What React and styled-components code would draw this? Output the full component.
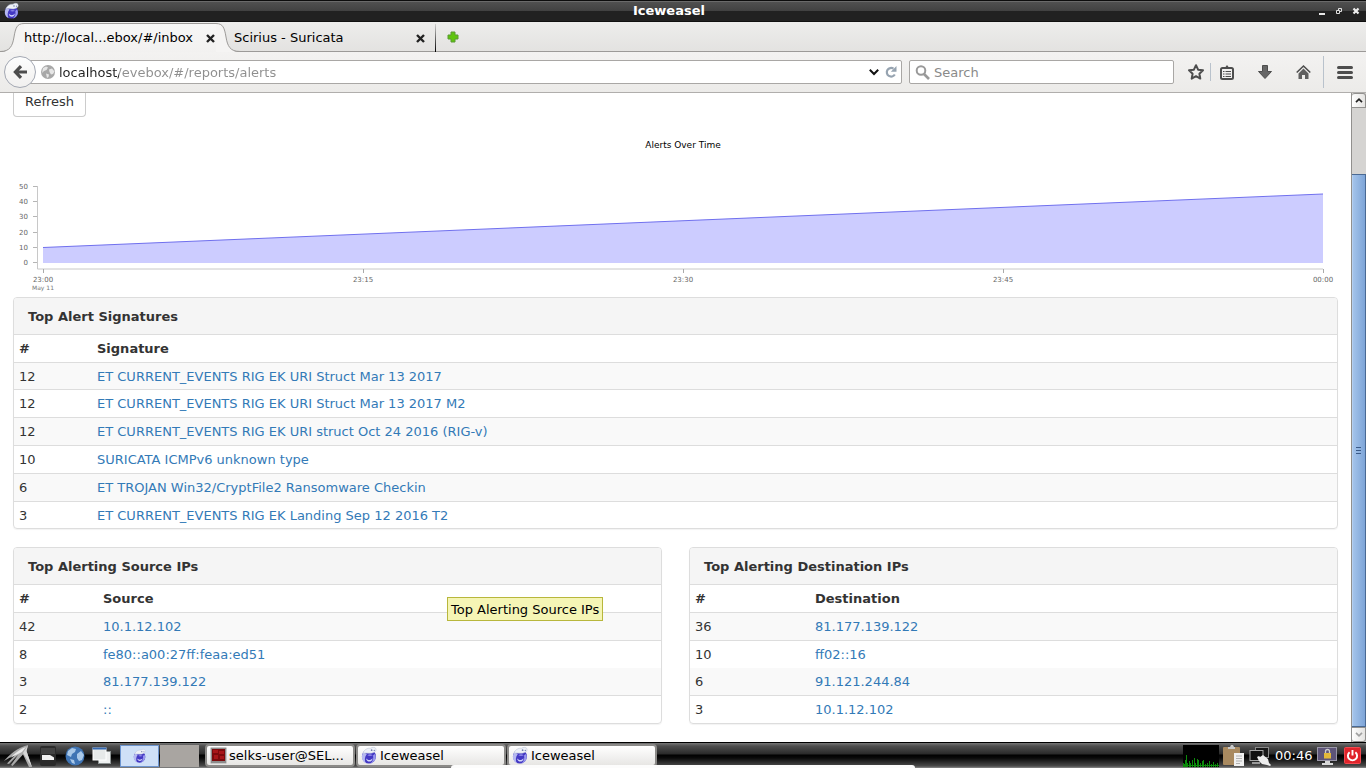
import React from "react";
import styled, { createGlobalStyle, css } from "styled-components";

const GlobalStyle = createGlobalStyle`
  *, *::before, *::after { box-sizing: border-box; }
  body { margin: 0; background: #fff; font-family: "DejaVu Sans", sans-serif; font-size: 13px; color: #333; }
  button, input { font: inherit; }
`;

const Desktop = styled.div`
  display: flex;
  flex-direction: column;
  min-height: 100vh;
`;

/* ---------- window title ---------- */
const TitleBar = styled.header`
  display: flex;
  align-items: center;
  height: 22px;
  padding: 0 6px 0 4px;
  color: #fff;
  border-top: 1px solid #0c0c0c;
  border-bottom: 1px solid #101010;
  background: linear-gradient(#6a6a6a 0 1px, #505050 1px, #414141 10px, #212121 10px, #212121 100%);
`;
const WindowTitle = styled.h1`
  flex: 1;
  margin: 0;
  font-size: 13px;
  line-height: 18px;
  font-weight: bold;
  text-align: center;
`;
const WindowControls = styled.div`
  display: flex;
  gap: 9px;
`;
const IconButton = styled.button`
  display: flex;
  align-items: center;
  justify-content: center;
  flex: none;
  width: ${(p) => p.$w || 24}px;
  height: ${(p) => p.$h || 24}px;
  padding: 0;
  border: 0;
  background: none;
  color: inherit;
`;
const Svg = styled.svg`
  display: block;
  flex: none;
  overflow: visible;
`;

/* ---------- tabs ---------- */
const TabStrip = styled.div`
  display: flex;
  height: 30px;
  background: linear-gradient(#ededec, #e3e2e0);
  box-shadow: inset 0 -1px #9c9a98;
`;
const ActiveTab = styled.div`
  display: flex;
  width: 240px;
`;
const TabBody = styled.div`
  display: flex;
  flex: 1;
  align-items: center;
  justify-content: space-between;
  height: 29px;
  margin-top: 1px;
  border-top: 1px solid #9c9a98;
  background: linear-gradient(#f7f7f6, #f2f1f0);
`;
const Tab = styled.div`
  display: flex;
  align-items: center;
  justify-content: space-between;
  width: 202px;
  padding: 2px 8px 0 0;
  margin-left: -6px;
  position: relative;
`;
const TabLabel = styled.span`
  color: #000;
  line-height: 18px;
  white-space: nowrap;
`;
const TabDivider = styled.span`
  width: 1px;
  margin: 2px 0 0 -1px;
  background: linear-gradient(#cfcfce, #000);
`;

/* ---------- toolbar ---------- */
const Toolbar = styled.div`
  display: flex;
  align-items: center;
  height: 41px;
  padding: 0 11px 0 4px;
  border-bottom: 1px solid #b0aeac;
  background: linear-gradient(#f3f2f1, #ecebe9);
`;
const BackButton = styled.button`
  display: flex;
  align-items: center;
  justify-content: center;
  flex: none;
  width: 32px;
  height: 32px;
  padding: 0;
  border: 1px solid #a3a8b3;
  border-radius: 50%;
  background: linear-gradient(#fdfdfd, #f1f0ef);
  position: relative;
`;
const Field = styled.label`
  display: flex;
  align-items: center;
  gap: 4px;
  height: 24px;
  border: 1px solid #a9a7a5;
  background: #fff;
  border-radius: ${(p) => (p.$joined ? "0 2px 2px 0" : "2px")};
  ${(p) =>
    p.$joined
      ? css`flex: 1; padding: 0 4px 0 12px; margin-left: -8px;`
      : css`flex: none; width: 265px; padding: 0 5px; margin-left: 7px;`}
`;
const TextInput = styled.input`
  flex: 1;
  min-width: 0;
  height: 20px;
  padding: 0;
  border: 0;
  outline: 0;
  background: none;
  color: #222;
  &::placeholder { color: #8a8a8a; opacity: 1; }
`;
const AddressInput = styled(TextInput)`
  color: transparent;
  background: linear-gradient(90deg, #222 60px, #8e8e8e 60px);
  -webkit-background-clip: text;
  background-clip: text;
`;
const ToolGroup = styled.div`
  display: flex;
  align-items: center;
  gap: ${(p) => p.$gap}px;
  margin-left: ${(p) => p.$before || 0}px;
`;
const ToolDivider = styled.span`
  width: 1px;
  height: ${(p) => p.$h}px;
  background: #b9c2cc;
`;

/* ---------- viewport ---------- */
const Viewport = styled.div`
  display: flex;
  flex: 1;
`;
const Page = styled.main`
  flex: 1;
  min-width: 0;
  padding: 0 13px 18px;
  background: #fff;
`;
const RefreshButton = styled.button`
  display: block;
  height: 24px;
  padding: 0 11px 5px;
  line-height: 18px;
  color: #333;
  background: #fff;
  border: 1px solid #ccc;
  border-top: 0;
  border-radius: 0 0 4px 4px;
`;
const Chart = styled.svg`
  display: block;
  width: 100%;
  height: auto;
  text { font-family: "DejaVu Sans", sans-serif; }
`;
const Panels = styled.div`
  display: grid;
  grid-template-columns: 1fr 1fr;
  gap: 18px 27px;
`;
const Panel = styled.section`
  overflow: hidden;
  border: 1px solid #ddd;
  border-radius: 4px;
  box-shadow: 0 1px 1px rgba(0, 0, 0, 0.05);
  ${(p) => p.$wide && css`grid-column: 1 / -1;`}
`;
const PanelHeading = styled.h2`
  margin: 0;
  height: 37px;
  padding: 9px 14px 0;
  font-size: 13px;
  line-height: 19px;
  font-weight: bold;
  background: #f5f5f5;
  border-bottom: 1px solid #ddd;
`;
const DataTable = styled.table`
  width: 100%;
  table-layout: fixed;
  border-collapse: separate;
  border-spacing: 0;
  th, td {
    height: 27px;
    padding: 4px 5px;
    line-height: 19px;
    text-align: left;
  }
  th:first-child { width: ${(p) => p.$first}px; }
`;
const Row = styled.tr`
  &:nth-child(odd) { background: #f9f9f9; }
  td { border-top: ${(p) => (p.$joined ? 0 : 1)}px solid #ddd; }
  ${(p) => p.$tight && css`td { padding-bottom: 3px; }`}
`;
const CellLink = styled.a`
  color: #337ab7;
  text-decoration: none;
`;
const Tooltip = styled.div`
  position: absolute;
  left: 447px;
  top: 597px;
  padding: 3px 3px 1px;
  line-height: 18px;
  color: #000;
  background: #f5f5b5;
  border: 1px solid #b8b73c;
`;

/* ---------- scrollbar ---------- */
const ScrollBar = styled.div`
  display: flex;
  flex-direction: column;
  width: 15px;
  border-left: 1px solid #91908e;
  background: #d5d4d2;
`;
const ScrollStep = styled.button`
  display: flex;
  align-items: center;
  justify-content: center;
  height: 15px;
  padding: 0;
  color: ${(p) => (p.$off ? "#a0a0a0" : "#222")};
  border: 1px solid #91908e;
  border-left: 0;
  border-radius: ${(p) => (p.$off ? "0 0 3px 3px" : "3px 3px 0 0")};
  background: linear-gradient(90deg, #fff, #e4e3e1);
`;
const ScrollTrack = styled.div`
  display: flex;
  flex: 1;
  padding-top: 66px;
`;
const ScrollThumb = styled.div`
  display: flex;
  align-items: center;
  justify-content: center;
  flex: 1;
  border: 1px solid #4a6a94;
  border-left: 0;
  background: linear-gradient(90deg, #b4cff0 0 1px, #a3c3ea 1px, #7ea5d8);
`;

/* ---------- taskbar ---------- */
const TaskBar = styled.footer`
  display: flex;
  align-items: center;
  height: 26px;
  padding: 0 4px;
  position: relative;
  overflow: hidden;
  border-top: 1px solid #000;
  background: linear-gradient(#777 0, #4e4e4e 3px, #2a2a2a 11px, #000 12px, #0a0a0a 15px, #4a4a4a 23px, #8a8a8a 25px);
`;
const Launchers = styled.div`
  display: flex;
  align-items: center;
  width: 116px;
  gap: 4px;
`;
const Pager = styled.div`
  display: flex;
  gap: 1px;
`;
const PagerCell = styled.button`
  display: flex;
  align-items: center;
  justify-content: center;
  width: 39px;
  height: 22px;
  padding: 0;
  border: ${(p) => (p.$current ? "1px solid #6c94cf" : "0")};
  background: ${(p) => (p.$current ? "#cfe0f7" : "#a9a5a1")};
`;
const TaskList = styled.div`
  display: flex;
  flex: 1;
  gap: 1px;
  padding-left: 6px;
`;
const TaskButton = styled.button`
  display: flex;
  align-items: center;
  gap: 2px;
  width: 150px;
  height: 23px;
  padding: 0 3px 1px;
  color: #000;
  white-space: nowrap;
  border: 2px solid #8b8a88;
  border-radius: 4px;
  background: linear-gradient(#fff, #e7e6e4);
`;
const Tray = styled.div`
  display: flex;
  align-items: center;
  gap: 4px;
`;
const Clock = styled.time`
  color: #fff;
  width: 37px;
  text-align: center;
`;
const DockEdge = styled.div`
  position: absolute;
  left: 33%;
  right: 33%;
  bottom: 0;
  height: 3px;
  border-radius: 6px 6px 0 0;
  background: #fcfcfc;
`;

/* ---------- icons ---------- */
const WeaselIcon = ({ size = 16 }) => (
  <Svg width={size} height={size} viewBox="0 0 16 16" aria-hidden="true">
    <circle cx="7.5" cy="9" r="6.6" fill="#4338c4" />
    <path d="M2.500 5C-.2 8 .3 13 4.500 15.300 3.200 12.500 3.300 9 5.500 6.500z" fill="#b5b8f0" />
    <path d="M13 6.500c2 3 .5 7.500-4 9 2.200-2 3-5 2.300-7.500z" fill="#9a9aec" />
    <path d="M4.800 10.500c1.500 2.200 4.500 2.200 6 0 .2 4-5.800 4.400-6 0z" fill="#d3d6fa" />
    <path d="M6 8c1.500-1.500 3.500-1.500 5 0-1.500.6-3.500.6-5 0z" fill="#8d88e8" />
    <path d="M1.800 5.800C3 2.500 6 .8 9 1.200c1.500-1.200 4.300-1.200 5 .3.700 1.700-.4 3.200-2.200 3.700C9.500 6.800 5.500 5 1.800 5.800z" fill="#eef1f7" stroke="#b9c3d8" strokeWidth=".5" />
    <circle cx="10" cy="3" r=".8" fill="#7380ad" />
    <circle cx="12.500" cy="3.200" r=".6" fill="#7380ad" />
  </Svg>
);
const CloseIcon = () => (
  <Svg width="9" height="9" viewBox="0 0 9 9" aria-hidden="true">
    <path d="M1 1l7 7M8 1L1 8" stroke="#222" strokeWidth="2.400" />
  </Svg>
);
const Chevron = ({ up }) => (
  <Svg width="8" height="5" viewBox="0 0 8 5" aria-hidden="true">
    <path d={up ? "M1 4.200l3-3 3 3" : "M1 .8l3 3 3-3"} fill="none" stroke="currentColor" strokeWidth="1.700" />
  </Svg>
);

const ticksY = [[50, 69.5], [40, 84.5], [30, 99.5], [20, 115.5], [10, 130.5], [0, 145.5]];
const ticksX = [["23:00", 30], ["23:15", 350], ["23:30", 670], ["23:45", 990], ["00:00", 1310]];

const AlertsChart = () => (
  <Chart viewBox="0 0 1325 180" role="img" aria-label="Alerts Over Time">
    <text x="670" y="31" fontSize="9" textAnchor="middle" fill="#000">Alerts Over Time</text>
    <path d="M30 130.500L1310 77V146H30z" fill="#ccccff" />
    <path d="M30 130.500L1310 77" stroke="#7070ee" fill="none" />
    <path d="M24.500 69V152H1310" stroke="#c8c8c8" strokeWidth="1" fill="none" />
    {ticksY.map(([v, y]) => (
      <g key={v}>
        <path d={`M20 ${y}h4`} stroke="#b5b5b5" />
        <text x="15" y={y + 2.5} fontSize="7" textAnchor="end" fill="#666">{v}</text>
      </g>
    ))}
    {ticksX.map(([v, x]) => (
      <g key={v}>
        <path d={`M${x + 0.5} 152v4`} stroke="#aaa" />
        <text x={x} y="165" fontSize="7" textAnchor="middle" fill="#666">{v}</text>
      </g>
    ))}
    <text x="30" y="173" fontSize="6" textAnchor="middle" fill="#777">May 11</text>
  </Chart>
);

const signatures = [
  [12, "ET CURRENT_EVENTS RIG EK URI Struct Mar 13 2017"],
  [12, "ET CURRENT_EVENTS RIG EK URI Struct Mar 13 2017 M2"],
  [12, "ET CURRENT_EVENTS RIG EK URI struct Oct 24 2016 (RIG-v)"],
  [10, "SURICATA ICMPv6 unknown type"],
  [6, "ET TROJAN Win32/CryptFile2 Ransomware Checkin"],
  [3, "ET CURRENT_EVENTS RIG EK Landing Sep 12 2016 T2"],
];
const sources = [[42, "10.1.12.102"], [8, "fe80::a00:27ff:feaa:ed51"], [3, "81.177.139.122"], [2, "::"]];
const destinations = [[36, "81.177.139.122"], [10, "ff02::16"], [6, "91.121.244.84"], [3, "10.1.12.102"]];

const TopPanel = ({ title, label, rows, first, wide, tight = [], joined = [] }) => (
  <Panel $wide={wide}>
    <PanelHeading>{title}</PanelHeading>
    <DataTable $first={first}>
      <thead>
        <tr><th scope="col">#</th><th scope="col">{label}</th></tr>
      </thead>
      <tbody>
        {rows.map(([count, name], i) => (
          <Row key={i} $tight={tight.includes(i)} $joined={joined.includes(i)}>
            <td>{count}</td>
            <td><CellLink href="#">{name}</CellLink></td>
          </Row>
        ))}
      </tbody>
    </DataTable>
  </Panel>
);

export default function App() {
  return (
    <Desktop>
      <GlobalStyle />
      <TitleBar>
        <WeaselIcon />
        <WindowTitle>Iceweasel</WindowTitle>
        <WindowControls>
          <IconButton $w={8} $h={8} aria-label="Minimize">
            <Svg width="8" height="8"><path d="M1 6h6v2H1z" fill="#e8e8e8" /></Svg>
          </IconButton>
          <IconButton $w={8} $h={8} aria-label="Restore">
            <Svg width="8" height="8" fill="none" stroke="#e0e0e0"><path d="M3.500 3V1.500h3v3H5M1.500 3.500h3v3h-3z" /></Svg>
          </IconButton>
          <IconButton $w={8} $h={8} aria-label="Close">
            <Svg width="8" height="8"><path d="M1.500 1.500l5 5M6.500 1.500l-5 5" stroke="#eee" strokeWidth="2.200" /></Svg>
          </IconButton>
        </WindowControls>
      </TitleBar>

      <TabStrip>
        <ActiveTab>
          <Svg width="24" height="30" viewBox="0 0 24 30" aria-hidden="true">
            <path d="M2 30C10 29 12.500 24 14 15 15.500 6 17 1.500 24 1.500V30z" fill="#f5f4f3" />
            <path d="M0 29.500C10 29.500 12.500 24 14 15 15.500 6 17 1.500 24 1.500" fill="none" stroke="#9c9a98" />
          </Svg>
          <TabBody>
            <TabLabel>http://local...ebox/#/inbox</TabLabel>
            <IconButton $w={12} $h={16} aria-label="Close tab"><CloseIcon /></IconButton>
          </TabBody>
          <Svg width="24" height="30" viewBox="0 0 24 30" aria-hidden="true">
            <path d="M0 1.500C7 1.500 8.500 6 10 15 11.500 24 14 29 22 30H0z" fill="#f5f4f3" />
            <path d="M0 1.500C7 1.500 8.500 6 10 15 11.500 24 14 29.500 24 29.500" fill="none" stroke="#9c9a98" />
          </Svg>
        </ActiveTab>
        <Tab>
          <TabLabel>Scirius - Suricata</TabLabel>
          <IconButton $w={16} $h={16} aria-label="Close tab"><CloseIcon /></IconButton>
        </Tab>
        <TabDivider />
        <IconButton $w={34} $h={30} aria-label="New tab">
          <Svg width="12" height="12"><path d="M4 1h4v3h3v4H8v3H4V8H1V4h3z" fill="#5fc40e" stroke="#5a9a34" strokeLinejoin="round" /></Svg>
        </IconButton>
      </TabStrip>

      <Toolbar>
        <BackButton aria-label="Back">
          <Svg width="14" height="14" viewBox="0 0 14 14"><path d="M8 1.200L2.400 7 8 12.800M3 7h11" fill="none" stroke="#4d4d4d" strokeWidth="3.200" /></Svg>
        </BackButton>
        <Field $joined>
          <Svg width="14" height="14" viewBox="0 0 14 14" aria-hidden="true">
            <circle cx="7" cy="7" r="7" fill="#a8a8a8" />
            <path d="M2 3l3-1.500 2 1L5.500 5 3 6 1 8zM8 4.500l3-1 2.500 3L12 9l-2 .5L8.500 7zM5 8.500l3 1L7.500 12 6 13z" fill="#e6e6e6" />
          </Svg>
          <AddressInput aria-label="Address" defaultValue="localhost/evebox/#/reports/alerts" />
          <IconButton $w={14} $h={20} aria-label="History">
            <Svg width="10" height="6"><path d="M.8.800l4.200 4.200 4.200-4.200" fill="none" stroke="#111" strokeWidth="2" /></Svg>
          </IconButton>
          <IconButton $w={12} $h={20} aria-label="Reload">
            <Svg width="12" height="12" viewBox="0 0 12 12">
              <path d="M8.500 2.700A4.300 4.300 0 1 0 9.800 8.500" fill="none" stroke="#96a3b0" strokeWidth="2.200" />
              <path d="M11.500 0v5.800H5.800z" fill="#96a3b0" />
            </Svg>
          </IconButton>
        </Field>
        <Field>
          <Svg width="15" height="15" viewBox="0 0 15 15" fill="none" stroke="#999" aria-hidden="true">
            <circle cx="6" cy="5.500" r="4.300" strokeWidth="2" />
            <path d="M9 9l5 5" strokeWidth="2.600" />
          </Svg>
          <TextInput aria-label="Search" placeholder="Search" />
        </Field>
        <ToolGroup $gap={14} $before={12}>
          <ToolGroup $gap={4}>
            <IconButton $w={20} aria-label="Bookmark this page">
              <Svg width="16" height="16" viewBox="0 0 16 16"><path d="M8 1.200l2.100 4.500 4.900.6-3.600 3.400.9 4.900L8 12.200l-4.300 2.400.9-4.900L1 6.300l4.900-.6z" fill="none" stroke="#4d4d4d" strokeWidth="2" strokeLinejoin="round" /></Svg>
            </IconButton>
            <ToolDivider $h={18} />
            <IconButton aria-label="Bookmarks">
              <Svg width="14" height="15" viewBox="0 0 14 15">
                <rect x="1" y="3" width="12" height="11" rx="1.500" fill="#f2f1f0" stroke="#4d4d4d" strokeWidth="2" />
                <path d="M4 3V2h1.500L7 0l1.500 2H10v1.500H4z" fill="#4d4d4d" />
                <path d="M3 6.500h1.500M5.500 6.500H11M3 9h1.500M5.500 9H11M3 11.500h1.500M5.500 11.500H11" stroke="#4d4d4d" strokeWidth="1.200" />
              </Svg>
            </IconButton>
          </ToolGroup>
          <IconButton aria-label="Downloads">
            <Svg width="14" height="14" viewBox="0 0 14 14"><path d="M4.500.5h5v6h4L7 13.500.5 6.500h4z" fill="#666" stroke="#4d4d4d" strokeLinejoin="round" /></Svg>
          </IconButton>
          <IconButton aria-label="Home">
            <Svg width="15" height="14" viewBox="0 0 15 14">
              <path d="M.7 7.500L7.500 1l6.800 6.500" fill="none" stroke="#4d4d4d" strokeWidth="1.600" />
              <path d="M2.500 8.400l5-4.800 5 4.800v5.600H9v-4H6v4H2.500z" fill="#606060" />
            </Svg>
          </IconButton>
        </ToolGroup>
        <ToolGroup $gap={11} $before={8}>
          <ToolDivider $h={32} />
          <IconButton $w={20} aria-label="Menu">
            <Svg width="16" height="13"><path d="M1.500 1.500h13M1.500 6.500h13M1.500 11.500h13" stroke="#4d4d4d" strokeWidth="3" strokeLinecap="round" /></Svg>
          </IconButton>
        </ToolGroup>
      </Toolbar>

      <Viewport>
        <Page>
          <RefreshButton>Refresh</RefreshButton>
          <AlertsChart />
          <Panels>
            <TopPanel wide title="Top Alert Signatures" label="Signature" rows={signatures} first={78} tight={[0, 5]} />
            <TopPanel title="Top Alerting Source IPs" label="Source" rows={sources} first={84} joined={[2]} />
            <TopPanel title="Top Alerting Destination IPs" label="Destination" rows={destinations} first={120} joined={[2]} />
          </Panels>
          <Tooltip role="tooltip">Top Alerting Source IPs</Tooltip>
        </Page>
        <ScrollBar>
          <ScrollStep aria-label="Scroll up"><Chevron up /></ScrollStep>
          <ScrollTrack>
            <ScrollThumb>
              <Svg width="6" height="8"><path d="M0 .5h5M0 3.500h5M0 6.500h5" stroke="#3a5a88" /></Svg>
            </ScrollThumb>
          </ScrollTrack>
          <ScrollStep $off aria-label="Scroll down"><Chevron /></ScrollStep>
        </ScrollBar>
      </Viewport>

      <TaskBar>
        <Launchers>
          <IconButton $w={28} aria-label="Menu">
            <Svg width="28" height="22" viewBox="0 0 28 22">
              <path d="M0 16C6 9 13 3 24 0l-1.500 6L28 22h-3L19 9.500 8.500 21 7 20l7-10-9 9-2-.5L12 9z" fill="#a9a9a9" />
              <path d="M24 0l-1.500 6L28 22l-9-14z" fill="#d6d6d6" />
              <path d="M6 13C11 8 16 4 22 2l-4 5z" fill="#e9e9e9" />
            </Svg>
          </IconButton>
          <IconButton $w={24} aria-label="Files">
            <Svg width="18" height="20" viewBox="0 0 18 20">
              <rect x="1" width="16" height="20" rx="2" fill="#2a2a2a" />
              <path d="M2 2h14v6H2z" fill="#424242" />
              <path d="M3 9h8l4 2.500V14H3z" fill="#f1f1f1" />
            </Svg>
          </IconButton>
          <IconButton $w={22} aria-label="Web browser">
            <Svg width="20" height="20" viewBox="0 0 20 20">
              <circle cx="10" cy="10" r="9.500" fill="#3f74b4" />
              <path d="M3 5l4-3 4 1-1 3-3 2-1 3-4-2zM12 8l4-3 3 4-2 5-3 1-2-3zM5 13l4 1 1 4-3-1z" fill="#a9c8e8" />
            </Svg>
          </IconButton>
          <IconButton aria-label="Show desktop">
            <Svg width="20" height="18" viewBox="0 0 20 18">
              <rect x="6.500" y="4.500" width="12" height="12" fill="#eef0f0" stroke="#8e9494" />
              <rect x="1" y="1" width="13" height="12" fill="#e6e9e9" stroke="#fff" />
              <path d="M.5 1.500h14" stroke="#3568b0" strokeWidth="2" />
            </Svg>
          </IconButton>
        </Launchers>
        <Pager>
          <PagerCell $current aria-label="Workspace 1"><WeaselIcon size={14} /></PagerCell>
          <PagerCell aria-label="Workspace 2" />
        </Pager>
        <TaskList>
          <TaskButton>
            <Svg width="17" height="17" viewBox="0 0 17 17">
              <rect x=".5" y=".5" width="16" height="16" rx="1" fill="#8c8c8c" stroke="#c9c9c9" />
              <path d="M2 2h13v12H2z" fill="#7c0a0c" />
              <path d="M3 3h5v3H3zM9 4h5v3H9zM4 8h4v4H4zM10 9h4v3h-4z" fill="#a81619" />
            </Svg>
            selks-user@SEL...
          </TaskButton>
          <TaskButton><WeaselIcon size={17} />Iceweasel</TaskButton>
          <TaskButton><WeaselIcon size={17} />Iceweasel</TaskButton>
        </TaskList>
        <Tray>
          <Svg width="36" height="22" viewBox="0 0 36 22" role="img" aria-label="CPU usage">
            <path d="M0 0h36v22H0z" fill="#000" />
            <path d="M.5 22v-4M1.500 22v-3M2.500 22v-7M3.500 22V10M4.500 22v-4M6.500 22v-6M7.500 22v-4M9.500 22v-7M11.500 22v-9M12.500 22v-4M14.500 22v-8M15.500 22v-7M17.500 22v-4M19.500 22v-6M20.500 22v-7M22.500 22v-3M24.500 22v-4M26.500 22v-6M28.500 22v-3M30.500 22v-5M32.500 22v-3M34.500 22v-4M0 20.500h36" stroke="#0a8a0a" />
          </Svg>
          <Svg width="22" height="22" viewBox="0 0 22 22" aria-hidden="true">
            <rect y="2" width="17" height="18" rx="1" fill="#a98a60" />
            <path d="M5 4V2h2l1-2h2l1 2h1v2z" fill="#c9c9c9" />
            <path d="M11 8h10v13H11z" fill="#f0f0f0" />
            <path d="M13 11h6M13 13.500h6M13 16h6M13 18.500h4" stroke="#b0b0b0" />
          </Svg>
          <Svg width="22" height="22" viewBox="0 0 22 22" aria-hidden="true">
            <rect x="6.500" y="2.500" width="13" height="10" fill="#181818" stroke="#8a8a8a" />
            <rect x="1" y="5.500" width="13" height="10" fill="#101010" stroke="#a5a5a5" />
            <path d="M3 18h8" stroke="#999" strokeWidth="2" />
            <path d="M8 12l2-1 1 1 3-2 5 4 1 4 2 2-1 1-3-1-5-1-3-3z" fill="#eee" />
          </Svg>
          <Clock>00:46</Clock>
          <IconButton $w={22} aria-label="Lock screen">
            <Svg width="21" height="20" viewBox="0 0 21 20">
              <rect x=".5" y="1.500" width="19" height="13" fill="#5d5478" stroke="#9a97a8" />
              <path d="M8 15h5v2h3v2H5v-2h3z" fill="#d9d9d9" />
              <rect x="7" y="7" width="7" height="5.500" fill="#e3b93a" />
              <path d="M8.500 7V5.500a2 2 0 0 1 4 0V7" fill="none" stroke="#ccc" strokeWidth="1.300" />
            </Svg>
          </IconButton>
          <IconButton $w={20} aria-label="Shut down">
            <Svg width="17" height="17" viewBox="0 0 17 17">
              <rect x=".5" y=".5" width="16" height="16" rx="1" fill="#e0232a" stroke="#f04a50" />
              <path d="M5.600 5.200a4.600 4.600 0 1 0 5.800 0M8.500 3v5.500" fill="none" stroke="#fff" strokeWidth="1.900" />
            </Svg>
          </IconButton>
        </Tray>
        <DockEdge />
      </TaskBar>
    </Desktop>
  );
}
